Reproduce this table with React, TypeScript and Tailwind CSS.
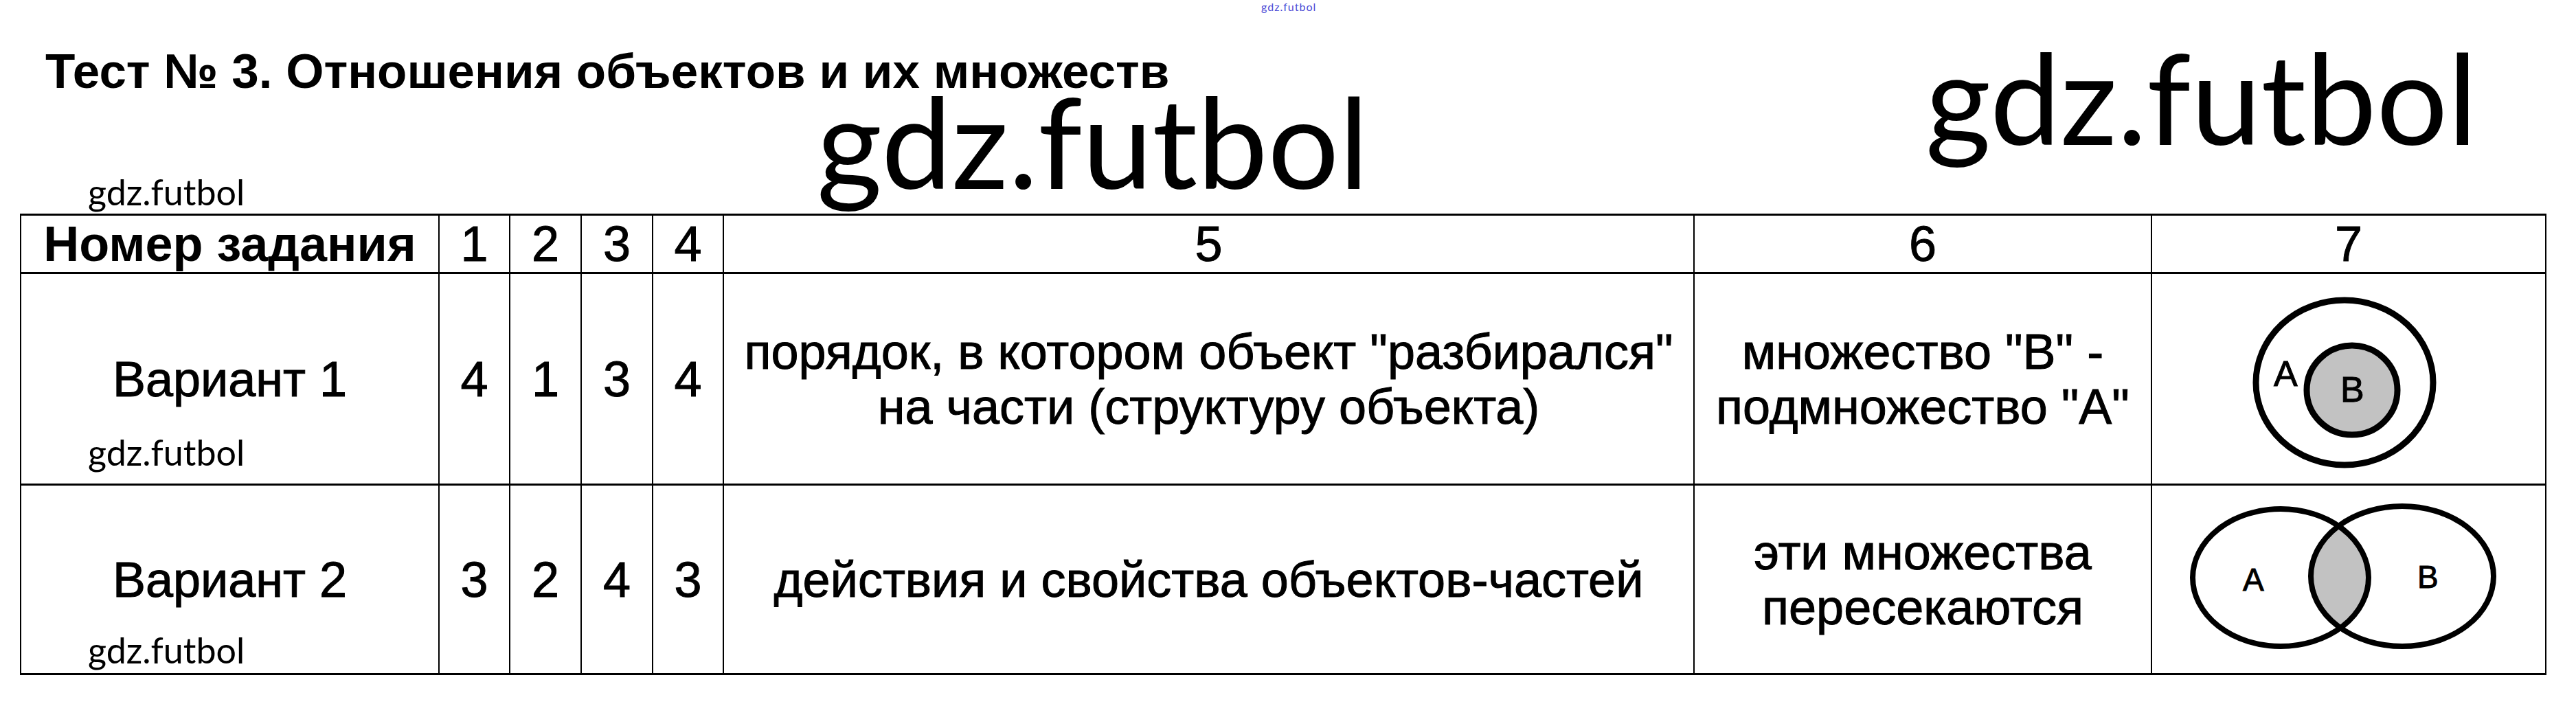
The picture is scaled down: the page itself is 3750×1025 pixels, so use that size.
import React from 'react'

// Answer key for test No. 3, redrawn as a bordered grid with two Venn sketches
type Variant = {
  label: string
  answers: string[]
  five: string[]
  six: string[]
  diagram: React.ReactNode
}

const NestedSets = () => (
  <svg viewBox="0 0 572 305" className="h-full w-full">
    <ellipse cx="280" cy="158" rx="129" ry="120" fill="none" stroke="#000" strokeWidth="9" />
    <ellipse cx="291" cy="169" rx="66" ry="65" fill="#c2c2c2" stroke="#000" strokeWidth="9" />
    <text x="177" y="163" fontSize="52" fontFamily="Liberation Sans, Arial, sans-serif" fill="#000" stroke="#000" strokeWidth="1">A</text>
    <text x="274" y="186" fontSize="52" fontFamily="Liberation Sans, Arial, sans-serif" fill="#000" stroke="#000" strokeWidth="1">B</text>
  </svg>
)

const CrossingSets = () => (
  <svg viewBox="0 0 572 273" className="h-full w-full">
    <defs>
      <clipPath id="leftSet">
        <ellipse cx="187" cy="134" rx="128" ry="100" />
      </clipPath>
    </defs>
    <ellipse cx="364" cy="132" rx="133" ry="102" fill="#c2c2c2" clipPath="url(#leftSet)" />
    <ellipse cx="187" cy="134" rx="128" ry="100" fill="none" stroke="#000" strokeWidth="8" />
    <ellipse cx="364" cy="132" rx="133" ry="102" fill="none" stroke="#000" strokeWidth="8" />
    <text x="132" y="153" fontSize="46" fontFamily="Liberation Sans, Arial, sans-serif" fill="#000" stroke="#000" strokeWidth="1">A</text>
    <text x="386" y="149" fontSize="46" fontFamily="Liberation Sans, Arial, sans-serif" fill="#000" stroke="#000" strokeWidth="1">B</text>
  </svg>
)

const variants: Variant[] = [
  {
    label: 'Вариант 1',
    answers: ['4', '1', '3', '4'],
    five: ['порядок, в котором объект "разбирался"', 'на части (структуру объекта)'],
    six: ['множество "В" -', 'подмножество "А"'],
    diagram: <NestedSets />,
  },
  {
    label: 'Вариант 2',
    answers: ['3', '2', '4', '3'],
    five: ['действия и свойства объектов-частей'],
    six: ['эти множества', 'пересекаются'],
    diagram: <CrossingSets />,
  },
]

const cell = 'flex items-center justify-center border-r-2 border-b-[3px] border-black text-center whitespace-nowrap'
const body = `${cell} [-webkit-text-stroke:1px_#000]`

const Lines = ({ lines }: { lines: string[] }) => (
  <div>
    {lines.map((l) => (
      <div key={l}>{l}</div>
    ))}
  </div>
)

export default function App() {
  return (
    <div className="relative h-[1025px] w-[3750px] overflow-hidden bg-white pt-[68px] font-['Liberation_Sans',Arial,sans-serif] text-black">
      <h1 className="h-[71px] pl-[66px] text-[71px] font-bold leading-none">
        Тест № 3. Отношения объектов и их множеств
      </h1>

      <div className="ml-[29px] mt-[172px] grid w-max grid-cols-[609px_103px_104px_104px_103px_1413px_666px_574px] grid-rows-[85px_308px_276px] border-l-2 border-t-[3px] border-black text-[72px] leading-[80px]">
        <div className={`${cell} font-bold`}>Номер задания</div>
        {['1', '2', '3', '4', '5', '6', '7'].map((n) => (
          <div key={n} className={`${body}`}>
            {n}
          </div>
        ))}

        {variants.map((v) => (
          <React.Fragment key={v.label}>
            <div className={body}>{v.label}</div>
            {v.answers.map((a, i) => (
              <div key={i} className={body}>
                {a}
              </div>
            ))}
            <div className={body}>
              <Lines lines={v.five} />
            </div>
            <div className={body}>
              <Lines lines={v.six} />
            </div>
            <div className={`${cell} overflow-hidden`}>{v.diagram}</div>
          </React.Fragment>
        ))}
      </div>

      {/* watermarks */}
      <div className="absolute left-[1836px] top-[2px] font-['Lato',sans-serif] text-[16px] leading-none tracking-[1px] text-[#4b4bd6]">
        gdz.futbol
      </div>
      <div className="absolute left-[1189px] top-[113px] font-['Lato',sans-serif] text-[183px] leading-none">
        gdz.futbol
      </div>
      <div className="absolute left-[2803px] top-[49px] font-['Lato',sans-serif] text-[183px] leading-none">
        gdz.futbol
      </div>
      <div className="absolute left-[128px] top-[253px] font-['Lato',sans-serif] text-[52px] leading-none">
        gdz.futbol
      </div>
      <div className="absolute left-[128px] top-[632px] font-['Lato',sans-serif] text-[52px] leading-none">
        gdz.futbol
      </div>
      <div className="absolute left-[128px] top-[920px] font-['Lato',sans-serif] text-[52px] leading-none">
        gdz.futbol
      </div>
    </div>
  )
}
